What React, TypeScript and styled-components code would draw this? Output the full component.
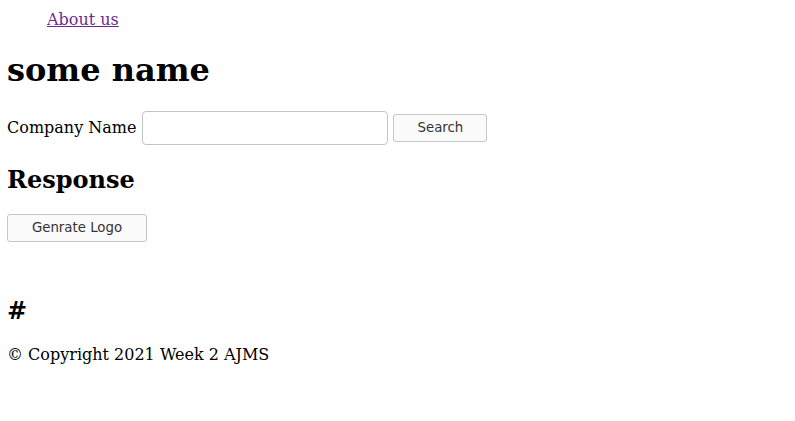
import React from "react";
import styled, { createGlobalStyle } from "styled-components";

const GlobalStyle = createGlobalStyle`
  body {
    margin: 8px 8px 8px 7px;
    font-family: "DejaVu Serif", serif;
    font-size: 16px;
    color: #000;
    background: #fff;
  }
`;

const Nav = styled.ul`
  margin: 2px 0 16px;
  padding: 0 0 1px 40px;
  list-style: none;
`;

const NavLink = styled.a`
  color: #6c2a8f;
  text-decoration: underline;
`;

const Title = styled.h1`
  font-size: 32px;
  margin: 21.44px 0;
`;

const SearchRow = styled.div`
  display: flex;
  align-items: center;
  gap: 5px;
`;

const Label = styled.label`
  margin-right: 1px;
`;

const TextInput = styled.input`
  box-sizing: border-box;
  width: 246px;
  height: 34px;
  border: 1px solid #c4c4c4;
  border-radius: 4px;
  padding: 0 8px;
  font-size: 16px;
`;

const Button = styled.button<{ $width: number }>`
  box-sizing: border-box;
  width: ${(p) => p.$width}px;
  height: 28px;
  border: 1px solid #c6c6c6;
  border-radius: 3px;
  background: #fafafa;
  color: #333;
  font-family: "DejaVu Sans", sans-serif;
  font-size: 13.33px;
  padding: 0;
`;

const Heading = styled.h2`
  font-size: 24px;
  margin: 19.92px 0;
`;

const LogoArea = styled.div`
  height: 34px;
`;

const Footer = styled.p`
  margin: 16px 0;
`;

export default function App() {
  return (
    <>
      <GlobalStyle />
      <Nav>
        <li>
          <NavLink href="#">About us</NavLink>
        </li>
      </Nav>
      <Title>some name</Title>
      <SearchRow>
        <Label>Company Name</Label>
        <TextInput type="text" />
        <Button $width={94}>Search</Button>
      </SearchRow>
      <Heading>Response</Heading>
      <Button $width={140}>Genrate Logo</Button>
      <LogoArea />
      <Heading>#</Heading>
      <Footer>© Copyright 2021 Week 2 AJMS</Footer>
    </>
  );
}
